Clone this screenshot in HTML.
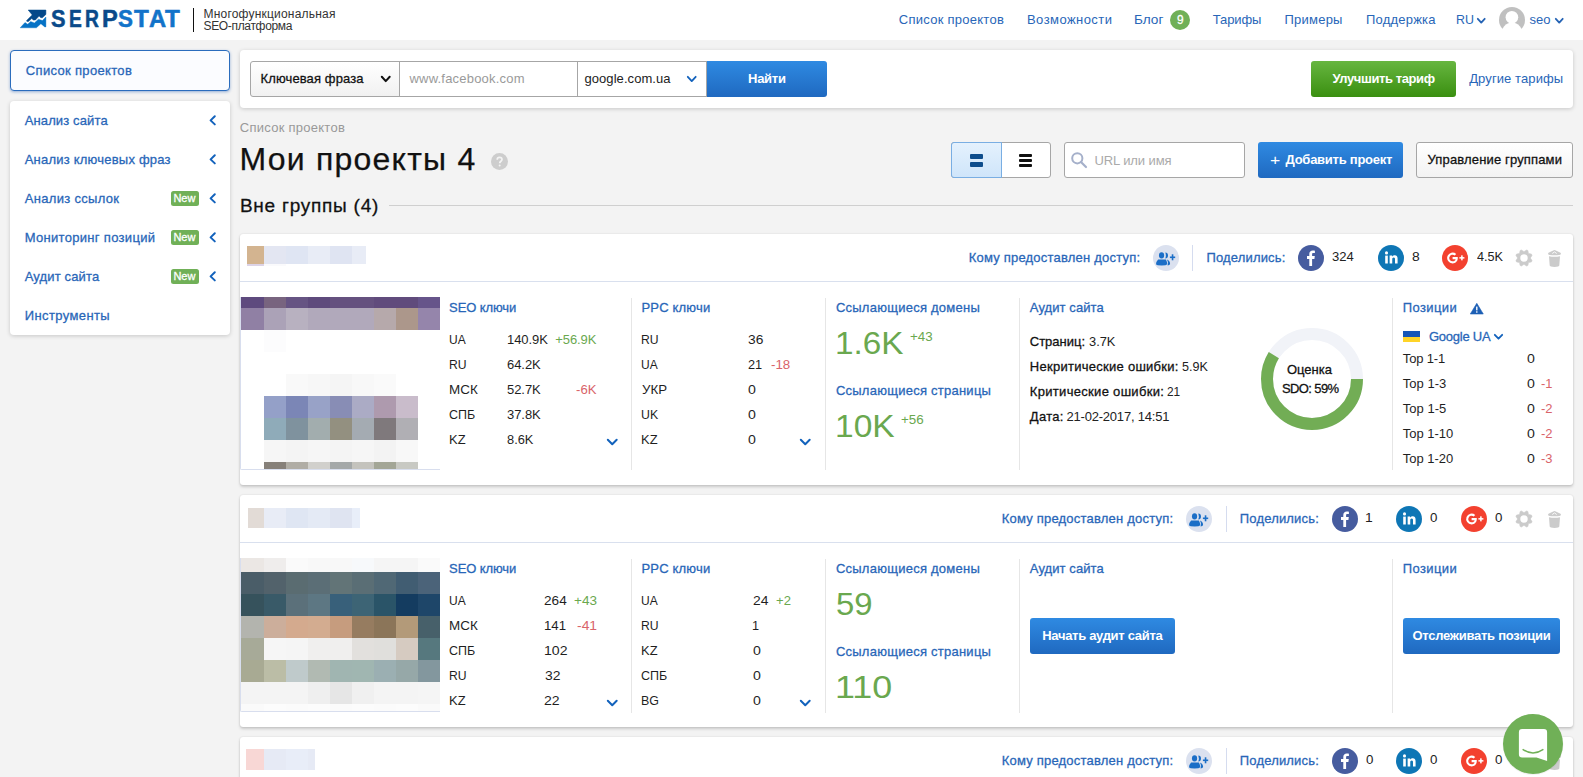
<!DOCTYPE html>
<html lang="ru"><head><meta charset="utf-8"><title>Serpstat — Мои проекты</title>
<style>
*{box-sizing:border-box;margin:0;padding:0}
html,body{width:1583px;height:777px;overflow:hidden;background:#f3f3f3;font-family:"Liberation Sans",sans-serif}
.a{position:absolute}
.t{position:absolute;white-space:pre;line-height:1;font-family:"Liberation Sans",sans-serif}
#txt{position:absolute;left:0;top:0;width:1583px;height:777px;pointer-events:none}
#hdr{position:absolute;left:0;top:0;width:1583px;height:40px;background:#fff}
.panel{position:absolute;background:#fff;border-radius:4px;box-shadow:0 1px 4px rgba(0,0,0,.18)}
.card{position:absolute;left:240px;width:1333px;background:#fff;border-radius:3px;box-shadow:0 2px 3px rgba(0,0,0,.17),0 0 2px rgba(0,0,0,.12)}
.hline{position:absolute;left:0;width:1333px;height:1px;background:#d9e0ee}
.vline{position:absolute;width:1px;background:#e6e6e6}
.btnb{position:absolute;border-radius:3px;background:linear-gradient(#2f8ae2,#1f69c0)}
.btng{position:absolute;border-radius:3px;background:linear-gradient(#67b640,#3a8f10)}
.circ{position:absolute;width:26px;height:26px;border-radius:50%}
.new{position:absolute;left:171px;width:28px;height:15px;border-radius:2.5px;background:#70b057}
.mz{position:absolute;overflow:hidden}
.mz i{position:absolute;display:block}
svg{position:absolute;overflow:visible}

</style></head>
<body>
<div id="hdr"></div>
<svg style="left:20px;top:10px" width="26" height="18" viewBox="0 0 26 18">
<polygon points="8.2,0 25.9,0 25.9,4.4 22.4,7.7 20.8,7.7 19.1,6.1 15.4,10 13.4,10 11.7,8.6 8.4,11.6 6.9,11.4 6.6,10.5 12.2,4.9" fill="#03488a" stroke="#03488a" stroke-width="0.5" stroke-linejoin="round"/>
<polygon points="0.2,17.8 5,12.5 7.7,14.2 10.7,11.6 14.4,12.9 18.4,9.2 22.4,10.6 25.9,7 25.9,16.9 24.8,16.9 20.9,13.7 16.4,17.8" fill="#0572c6" stroke="#0572c6" stroke-width="0.4" stroke-linejoin="round"/>
</svg>
<span class="t" style="left:51.34px;top:6.77px;font-size:22.9px;font-weight:700;color:#0a4a8a;transform:scale(0.949,1.064);transform-origin:0 0;-webkit-text-stroke:0.5px #0a4a8a">S</span>
<span class="t" style="left:69.44px;top:6.77px;font-size:22.9px;font-weight:700;color:#0a4a8a;transform:scale(0.837,1.064);transform-origin:0 0;-webkit-text-stroke:0.5px #0a4a8a">E</span>
<span class="t" style="left:85.34px;top:6.77px;font-size:22.9px;font-weight:700;color:#0a4a8a;transform:scale(0.841,1.064);transform-origin:0 0;-webkit-text-stroke:0.5px #0a4a8a">R</span>
<span class="t" style="left:102.35px;top:6.77px;font-size:22.9px;font-weight:700;color:#0a4a8a;transform:scale(1.031,1.064);transform-origin:0 0;-webkit-text-stroke:0.5px #0a4a8a">P</span>
<span class="t" style="left:118.02px;top:6.77px;font-size:22.9px;font-weight:700;color:#1273c9;transform:scale(0.978,1.064);transform-origin:0 0;-webkit-text-stroke:0.5px #1273c9">S</span>
<span class="t" style="left:134.08px;top:6.77px;font-size:22.9px;font-weight:700;color:#1273c9;transform:scale(1.060,1.064);transform-origin:0 0;-webkit-text-stroke:0.5px #1273c9">T</span>
<span class="t" style="left:148.58px;top:6.77px;font-size:22.9px;font-weight:700;color:#1273c9;transform:scale(1.039,1.064);transform-origin:0 0;-webkit-text-stroke:0.5px #1273c9">A</span>
<span class="t" style="left:165.38px;top:6.77px;font-size:22.9px;font-weight:700;color:#1273c9;transform:scale(1.060,1.064);transform-origin:0 0;-webkit-text-stroke:0.5px #1273c9">T</span>
<div class="a" style="left:193px;top:8px;width:1px;height:24px;background:#111"></div>
<div class="a" style="left:1170px;top:10px;width:20px;height:20px;border-radius:50%;background:#70b057"></div>
<svg style="left:1477px;top:17.5px" width="8.5" height="5.5" viewBox="0 0 8.5 5.5"><polyline points="0.8,0.8 4.25,4.6 7.7,0.8" fill="none" stroke="#2563b4" stroke-width="1.8" stroke-linecap="round" stroke-linejoin="round"/></svg>
<svg style="left:1554.5px;top:17.5px" width="8.5" height="5.5" viewBox="0 0 8.5 5.5"><polyline points="0.8,0.8 4.25,4.6 7.7,0.8" fill="none" stroke="#2563b4" stroke-width="1.8" stroke-linecap="round" stroke-linejoin="round"/></svg>
<svg style="left:1499px;top:7px;overflow:hidden" width="26" height="33" viewBox="0 0 26 33"><circle cx="13" cy="13" r="13" fill="#c0c0c0"/><g fill="#fff"><circle cx="12.9" cy="10.2" r="6.3"/><ellipse cx="13" cy="28" rx="11" ry="12.4"/></g></svg>
<div class="a" style="left:10px;top:50px;width:220px;height:41px;border-radius:4px;background:#fbfcff;border:1px solid #2a6cbd;box-shadow:0 1px 3px rgba(30,90,180,.45)"></div>
<div class="panel" style="left:10px;top:101px;width:220px;height:234px"></div>
<svg style="left:209.4px;top:115.4px" width="7" height="11" viewBox="0 0 7 11"><polyline points="5.8,1.3 1.6,5.35 5.8,9.4" fill="none" stroke="#1262bc" stroke-width="2" stroke-linecap="round" stroke-linejoin="round"/></svg>
<svg style="left:209.4px;top:154.4px" width="7" height="11" viewBox="0 0 7 11"><polyline points="5.8,1.3 1.6,5.35 5.8,9.4" fill="none" stroke="#1262bc" stroke-width="2" stroke-linecap="round" stroke-linejoin="round"/></svg>
<svg style="left:209.4px;top:193.4px" width="7" height="11" viewBox="0 0 7 11"><polyline points="5.8,1.3 1.6,5.35 5.8,9.4" fill="none" stroke="#1262bc" stroke-width="2" stroke-linecap="round" stroke-linejoin="round"/></svg>
<svg style="left:209.4px;top:232.4px" width="7" height="11" viewBox="0 0 7 11"><polyline points="5.8,1.3 1.6,5.35 5.8,9.4" fill="none" stroke="#1262bc" stroke-width="2" stroke-linecap="round" stroke-linejoin="round"/></svg>
<svg style="left:209.4px;top:271.4px" width="7" height="11" viewBox="0 0 7 11"><polyline points="5.8,1.3 1.6,5.35 5.8,9.4" fill="none" stroke="#1262bc" stroke-width="2" stroke-linecap="round" stroke-linejoin="round"/></svg>
<div class="new" style="top:191.2px"></div>
<div class="new" style="top:230.2px"></div>
<div class="new" style="top:269.2px"></div>
<div class="panel" style="left:240px;top:50px;width:1333px;height:57.5px"></div>
<div class="a" style="left:250px;top:61px;width:150px;height:36px;border:1px solid #a6a6a6;border-radius:3px 0 0 3px;background:linear-gradient(#fff,#f1f1f1)"></div>
<div class="a" style="left:399px;top:61px;width:179px;height:36px;border:1px solid #a6a6a6;background:#fff"></div>
<div class="a" style="left:577px;top:61px;width:130px;height:36px;border:1px solid #a6a6a6;background:#fff"></div>
<svg style="left:380.5px;top:76px" width="9.5" height="6" viewBox="0 0 9.5 6"><polyline points="0.8,0.8 4.75,5.1 8.7,0.8" fill="none" stroke="#111" stroke-width="2" stroke-linecap="round" stroke-linejoin="round"/></svg>
<svg style="left:687px;top:76px" width="9.5" height="6" viewBox="0 0 9.5 6"><polyline points="0.8,0.8 4.75,5.1 8.7,0.8" fill="none" stroke="#1262bc" stroke-width="1.8" stroke-linecap="round" stroke-linejoin="round"/></svg>
<div class="btnb" style="left:706.5px;top:61px;width:120.5px;height:36px;border-radius:0 3px 3px 0"></div>
<div class="btng" style="left:1311px;top:61px;width:145px;height:36px"></div>
<svg style="left:490.5px;top:152.5px" width="17" height="17" viewBox="0 0 17 17"><circle cx="8.5" cy="8.5" r="8.5" fill="#cdcdcd"/>
<path d="M6.2,6.7 C6.2,5.2 7.2,4.4 8.6,4.4 C10,4.4 11,5.2 11,6.5 C11,8.2 8.7,8.3 8.7,10.2" fill="none" stroke="#f3f3f3" stroke-width="1.7"/><circle cx="8.7" cy="12.4" r="1" fill="#f3f3f3"/></svg>
<div class="a" style="left:389px;top:205px;width:1184px;height:1px;background:#cfcfcf"></div>
<div class="a" style="left:951px;top:142px;width:100px;height:36px;border:1px solid #a6a6a6;border-radius:3px;background:#fff"></div>
<div class="a" style="left:951px;top:142px;width:51px;height:36px;border:1px solid #79aee3;border-radius:3px 0 0 3px;background:linear-gradient(#e4f1fd,#cfe5fa)"></div>
<div class="a" style="left:970px;top:154px;width:13px;height:5px;border-radius:1px;background:#0e4d8c"></div>
<div class="a" style="left:970px;top:162px;width:13px;height:5px;border-radius:1px;background:#0e4d8c"></div>
<div class="a" style="left:1019px;top:154px;width:13px;height:3px;border-radius:1px;background:#111"></div>
<div class="a" style="left:1019px;top:159px;width:13px;height:3px;border-radius:1px;background:#111"></div>
<div class="a" style="left:1019px;top:164px;width:13px;height:3px;border-radius:1px;background:#111"></div>
<div class="a" style="left:1064px;top:142px;width:181px;height:36px;border:1px solid #a6a6a6;border-radius:3px;background:#fff"></div>
<svg style="left:1071px;top:152px" width="16" height="16" viewBox="0 0 16 16"><circle cx="6.3" cy="6.3" r="5.1" fill="none" stroke="#a5b0ca" stroke-width="2"/><line x1="10" y1="10" x2="15" y2="15" stroke="#a5b0ca" stroke-width="2.2" stroke-linecap="round"/></svg>
<div class="btnb" style="left:1258px;top:142px;width:145px;height:36px"></div>
<div class="a" style="left:1416px;top:142px;width:157px;height:36px;border:1px solid #a6a6a6;border-radius:3px;background:linear-gradient(#fff,#f3f3f3)"></div>
<div class="card" style="top:234px;height:251px"></div>
<div class="hline" style="left:240px;top:281px"></div>
<svg style="left:1153px;top:245px" width="26" height="26" viewBox="0 0 26 26"><circle cx="13" cy="13" r="13" fill="#dbe1ef"/><g fill="#1b6ec7"><ellipse cx="8.55" cy="10.4" rx="2.6" ry="3.05"/><path d="M5.1,14.6 H12.9 Q14.3,17 14.1,19.2 Q13.5,20.4 8.6,20.4 Q3.6,20.4 3,19.2 Q2.9,17 5.1,14.6Z"/><path d="M12.3,7.4 Q15,7.6 15,10.4 Q15,13.2 12.3,13.4 Q13.4,10.4 12.3,7.4Z"/><path d="M14,14.6 Q17.1,16 17.1,19 Q16.6,20.3 14.6,20.4 Q15.8,17.5 14,14.6Z"/><rect x="16.9" y="11.5" width="5.3" height="1.6"/><rect x="18.75" y="9.3" width="1.6" height="6"/></g></svg>
<div class="a" style="left:1192px;top:244.6px;width:1px;height:26.5px;background:#d5dcef"></div>
<svg style="left:1298px;top:245px" width="26" height="26" viewBox="0 0 26 26"><circle cx="13" cy="13" r="13" fill="#465c9f"/><path d="M14.1,21 V13.9 H16.4 L16.8,11.1 H14.1 V9.4 C14.1,8.6 14.4,8.1 15.5,8.1 H16.9 V5.7 C16.6,5.6 15.8,5.5 14.8,5.5 C12.7,5.5 11.3,6.8 11.3,9.1 V11.1 H9 V13.9 H11.3 V21 Z" fill="#fff"/></svg>
<svg style="left:1377.7px;top:245px" width="26" height="26" viewBox="0 0 26 26"><circle cx="13" cy="13" r="13" fill="#0e76b5"/><g fill="#fff"><rect x="7.2" y="10.6" width="2.6" height="7.9"/><circle cx="8.5" cy="7.9" r="1.55"/><path d="M11.6,10.6 h2.5 v1.1 c0.5,-0.8 1.4,-1.35 2.6,-1.35 c2.2,0 2.9,1.4 2.9,3.5 v4.65 h-2.6 v-4.1 c0,-1.1 -0.3,-1.8 -1.25,-1.8 c-1.05,0 -1.5,0.75 -1.5,1.8 v4.1 h-2.6 Z"/></g></svg>
<svg style="left:1442px;top:245px" width="26" height="26" viewBox="0 0 26 26"><circle cx="13" cy="13" r="13" fill="#f3412f"/><g fill="#fff"><path d="M10.6,12.1 v2.1 h3 c-0.3,1.3 -1.3,2.1 -3,2.1 a3.3,3.3 0 1 1 2.1,-5.8 l1.5,-1.5 a5.4,5.4 0 1 0 -3.6,9.4 c3.1,0 5.2,-2.2 5.2,-5.3 c0,-0.4 0,-0.7 -0.1,-1 Z"/><rect x="17.4" y="12.1" width="5" height="1.5"/><rect x="19.15" y="10.35" width="1.5" height="5"/></g></svg>
<svg style="left:1515.2px;top:249.1px" width="18" height="18" viewBox="0 0 18 18"><polygon points="15.59,9.29 17.06,11.54 16.50,12.90 13.87,13.46 13.46,13.87 12.90,16.50 11.54,17.06 9.29,15.59 8.71,15.59 6.46,17.06 5.10,16.50 4.54,13.87 4.13,13.46 1.50,12.90 0.94,11.54 2.41,9.29 2.41,8.71 0.94,6.46 1.50,5.10 4.13,4.54 4.54,4.13 5.10,1.50 6.46,0.94 8.71,2.41 9.29,2.41 11.54,0.94 12.90,1.50 13.46,4.13 13.87,4.54 16.50,5.10 17.06,6.46 15.59,8.71" fill="#cbcbcb" stroke="#cbcbcb" stroke-width="0.5" stroke-linejoin="round"/><circle cx="9" cy="9" r="3.7" fill="#fff"/></svg>
<svg style="left:1548px;top:250px" width="13" height="17" viewBox="0 0 13 17"><g fill="#cbcbcb"><path d="M0,3.7 Q0,2.5 2,1.9 L5.2,0.4 Q6.5,-0.3 7.8,0.4 L11,1.9 Q13,2.5 13,3.7 Q13,5.3 6.5,5.3 Q0,5.3 0,3.7Z"/><path d="M1,6.2 Q6.5,7.5 12,6.2 L11.3,15.6 Q11.2,17 6.5,17 Q1.8,17 1.7,15.6 Z"/></g><polyline points="4.3,3.5 6.5,1.9 8.7,3.5" fill="none" stroke="#fff" stroke-width="0.9" stroke-linejoin="round"/></svg>
<div class="vline" style="left:631px;top:297.5px;height:172px"></div>
<div class="vline" style="left:825px;top:297.5px;height:172px"></div>
<div class="vline" style="left:1019px;top:297.5px;height:172px"></div>
<div class="vline" style="left:1392px;top:297.5px;height:172px"></div>
<svg style="left:606.7px;top:438.8px" width="10.5" height="6.2" viewBox="0 0 10.5 6.2"><polyline points="0.8,0.8 5.25,5.3 9.7,0.8" fill="none" stroke="#1262bc" stroke-width="2" stroke-linecap="round" stroke-linejoin="round"/></svg>
<svg style="left:800.4px;top:438.8px" width="10.5" height="6.2" viewBox="0 0 10.5 6.2"><polyline points="0.8,0.8 5.25,5.3 9.7,0.8" fill="none" stroke="#1262bc" stroke-width="2" stroke-linecap="round" stroke-linejoin="round"/></svg>
<div class="a" style="left:240px;top:297px;width:200px;height:173px;border-left:1px solid #d8deee;border-bottom:1px solid #d8deee;border-radius:0 0 0 2px"></div><div class="mz" style="left:241px;top:297px;width:199px;height:172px;background:#fff"><i style="left:0px;top:0px;width:23px;height:11px;background:#5e4a7e"></i><i style="left:23px;top:0px;width:22px;height:11px;background:#78647f"></i><i style="left:45px;top:0px;width:22px;height:11px;background:#665483"></i><i style="left:67px;top:0px;width:22px;height:11px;background:#5e4a7c"></i><i style="left:89px;top:0px;width:22px;height:11px;background:#65517f"></i><i style="left:111px;top:0px;width:22px;height:11px;background:#65517f"></i><i style="left:133px;top:0px;width:22px;height:11px;background:#604b7c"></i><i style="left:155px;top:0px;width:22px;height:11px;background:#604b7c"></i><i style="left:177px;top:0px;width:22px;height:11px;background:#66548a"></i><i style="left:0px;top:11px;width:23px;height:22px;background:#9080a4"></i><i style="left:23px;top:11px;width:22px;height:22px;background:#aba2b7"></i><i style="left:45px;top:11px;width:22px;height:22px;background:#b8b1c0"></i><i style="left:67px;top:11px;width:22px;height:22px;background:#b1a9bb"></i><i style="left:89px;top:11px;width:22px;height:22px;background:#b1a9bb"></i><i style="left:111px;top:11px;width:22px;height:22px;background:#b1a9bb"></i><i style="left:133px;top:11px;width:22px;height:22px;background:#b6a9ab"></i><i style="left:155px;top:11px;width:22px;height:22px;background:#ac978b"></i><i style="left:177px;top:11px;width:22px;height:22px;background:#9585ab"></i><i style="left:23px;top:33px;width:22px;height:22px;background:#fcfcfd"></i><i style="left:45px;top:77px;width:22px;height:22px;background:#f9f9f9"></i><i style="left:67px;top:77px;width:22px;height:22px;background:#f7f7f7"></i><i style="left:89px;top:77px;width:22px;height:22px;background:#f5f5f5"></i><i style="left:111px;top:77px;width:22px;height:22px;background:#f8f8f8"></i><i style="left:133px;top:77px;width:22px;height:22px;background:#fafafa"></i><i style="left:23px;top:99px;width:22px;height:22px;background:#94a0c8"></i><i style="left:45px;top:99px;width:22px;height:22px;background:#7b86b6"></i><i style="left:67px;top:99px;width:22px;height:22px;background:#98a2c7"></i><i style="left:89px;top:99px;width:22px;height:22px;background:#888db5"></i><i style="left:111px;top:99px;width:22px;height:22px;background:#ababc5"></i><i style="left:133px;top:99px;width:22px;height:22px;background:#ae9aae"></i><i style="left:155px;top:99px;width:22px;height:22px;background:#c9bccb"></i><i style="left:23px;top:121px;width:22px;height:22px;background:#8fabb9"></i><i style="left:45px;top:121px;width:22px;height:22px;background:#7f929e"></i><i style="left:67px;top:121px;width:22px;height:22px;background:#a2adae"></i><i style="left:89px;top:121px;width:22px;height:22px;background:#939080"></i><i style="left:111px;top:121px;width:22px;height:22px;background:#a4abb2"></i><i style="left:133px;top:121px;width:22px;height:22px;background:#7f797c"></i><i style="left:155px;top:121px;width:22px;height:22px;background:#b0afb4"></i><i style="left:23px;top:143px;width:22px;height:22px;background:#f6f6f6"></i><i style="left:45px;top:143px;width:22px;height:22px;background:#f4f4f4"></i><i style="left:67px;top:143px;width:22px;height:22px;background:#f6f6f6"></i><i style="left:89px;top:143px;width:22px;height:22px;background:#f4f4f4"></i><i style="left:111px;top:143px;width:22px;height:22px;background:#f6f6f6"></i><i style="left:133px;top:143px;width:22px;height:22px;background:#f3f3f3"></i><i style="left:155px;top:143px;width:22px;height:22px;background:#f8f8f8"></i><i style="left:23px;top:165px;width:22px;height:7px;background:#868079"></i><i style="left:45px;top:165px;width:22px;height:7px;background:#b0ada5"></i><i style="left:67px;top:165px;width:22px;height:7px;background:#d1d0cc"></i><i style="left:89px;top:165px;width:22px;height:7px;background:#a4a8a8"></i><i style="left:111px;top:165px;width:22px;height:7px;background:#c4c3bd"></i><i style="left:133px;top:165px;width:22px;height:7px;background:#a3a696"></i><i style="left:155px;top:165px;width:22px;height:7px;background:#c8c9c3"></i></div>
<div class="mz" style="left:247px;top:246px;width:119px;height:20px;background:#fff"><i style="left:0px;top:0px;width:17px;height:18px;background:#d3b490"></i><i style="left:17px;top:0px;width:22px;height:18px;background:#e3e6f2"></i><i style="left:39px;top:0px;width:22px;height:18px;background:#dfe5f3"></i><i style="left:61px;top:0px;width:22px;height:18px;background:#e8ecf6"></i><i style="left:83px;top:0px;width:22px;height:18px;background:#dfe4f2"></i><i style="left:105px;top:0px;width:14px;height:18px;background:#e8ecf6"></i><i style="left:0px;top:18px;width:17px;height:2px;background:#dcd3e6"></i><i style="left:17px;top:18px;width:22px;height:2px;background:#fafafc"></i></div>
<div class="card" style="top:495px;height:232px"></div>
<div class="hline" style="left:240px;top:542px"></div>
<svg style="left:1185.7px;top:506px" width="26" height="26" viewBox="0 0 26 26"><circle cx="13" cy="13" r="13" fill="#dbe1ef"/><g fill="#1b6ec7"><ellipse cx="8.55" cy="10.4" rx="2.6" ry="3.05"/><path d="M5.1,14.6 H12.9 Q14.3,17 14.1,19.2 Q13.5,20.4 8.6,20.4 Q3.6,20.4 3,19.2 Q2.9,17 5.1,14.6Z"/><path d="M12.3,7.4 Q15,7.6 15,10.4 Q15,13.2 12.3,13.4 Q13.4,10.4 12.3,7.4Z"/><path d="M14,14.6 Q17.1,16 17.1,19 Q16.6,20.3 14.6,20.4 Q15.8,17.5 14,14.6Z"/><rect x="16.9" y="11.5" width="5.3" height="1.6"/><rect x="18.75" y="9.3" width="1.6" height="6"/></g></svg>
<div class="a" style="left:1226px;top:505.6px;width:1px;height:26.5px;background:#d5dcef"></div>
<svg style="left:1332px;top:506px" width="26" height="26" viewBox="0 0 26 26"><circle cx="13" cy="13" r="13" fill="#465c9f"/><path d="M14.1,21 V13.9 H16.4 L16.8,11.1 H14.1 V9.4 C14.1,8.6 14.4,8.1 15.5,8.1 H16.9 V5.7 C16.6,5.6 15.8,5.5 14.8,5.5 C12.7,5.5 11.3,6.8 11.3,9.1 V11.1 H9 V13.9 H11.3 V21 Z" fill="#fff"/></svg>
<svg style="left:1396.2px;top:506px" width="26" height="26" viewBox="0 0 26 26"><circle cx="13" cy="13" r="13" fill="#0e76b5"/><g fill="#fff"><rect x="7.2" y="10.6" width="2.6" height="7.9"/><circle cx="8.5" cy="7.9" r="1.55"/><path d="M11.6,10.6 h2.5 v1.1 c0.5,-0.8 1.4,-1.35 2.6,-1.35 c2.2,0 2.9,1.4 2.9,3.5 v4.65 h-2.6 v-4.1 c0,-1.1 -0.3,-1.8 -1.25,-1.8 c-1.05,0 -1.5,0.75 -1.5,1.8 v4.1 h-2.6 Z"/></g></svg>
<svg style="left:1461.3px;top:506px" width="26" height="26" viewBox="0 0 26 26"><circle cx="13" cy="13" r="13" fill="#f3412f"/><g fill="#fff"><path d="M10.6,12.1 v2.1 h3 c-0.3,1.3 -1.3,2.1 -3,2.1 a3.3,3.3 0 1 1 2.1,-5.8 l1.5,-1.5 a5.4,5.4 0 1 0 -3.6,9.4 c3.1,0 5.2,-2.2 5.2,-5.3 c0,-0.4 0,-0.7 -0.1,-1 Z"/><rect x="17.4" y="12.1" width="5" height="1.5"/><rect x="19.15" y="10.35" width="1.5" height="5"/></g></svg>
<svg style="left:1515.2px;top:510.1px" width="18" height="18" viewBox="0 0 18 18"><polygon points="15.59,9.29 17.06,11.54 16.50,12.90 13.87,13.46 13.46,13.87 12.90,16.50 11.54,17.06 9.29,15.59 8.71,15.59 6.46,17.06 5.10,16.50 4.54,13.87 4.13,13.46 1.50,12.90 0.94,11.54 2.41,9.29 2.41,8.71 0.94,6.46 1.50,5.10 4.13,4.54 4.54,4.13 5.10,1.50 6.46,0.94 8.71,2.41 9.29,2.41 11.54,0.94 12.90,1.50 13.46,4.13 13.87,4.54 16.50,5.10 17.06,6.46 15.59,8.71" fill="#cbcbcb" stroke="#cbcbcb" stroke-width="0.5" stroke-linejoin="round"/><circle cx="9" cy="9" r="3.7" fill="#fff"/></svg>
<svg style="left:1548px;top:511px" width="13" height="17" viewBox="0 0 13 17"><g fill="#cbcbcb"><path d="M0,3.7 Q0,2.5 2,1.9 L5.2,0.4 Q6.5,-0.3 7.8,0.4 L11,1.9 Q13,2.5 13,3.7 Q13,5.3 6.5,5.3 Q0,5.3 0,3.7Z"/><path d="M1,6.2 Q6.5,7.5 12,6.2 L11.3,15.6 Q11.2,17 6.5,17 Q1.8,17 1.7,15.6 Z"/></g><polyline points="4.3,3.5 6.5,1.9 8.7,3.5" fill="none" stroke="#fff" stroke-width="0.9" stroke-linejoin="round"/></svg>
<div class="vline" style="left:631px;top:558.5px;height:154px"></div>
<div class="vline" style="left:825px;top:558.5px;height:154px"></div>
<div class="vline" style="left:1019px;top:558.5px;height:154px"></div>
<div class="vline" style="left:1392px;top:558.5px;height:154px"></div>
<svg style="left:606.7px;top:699.8px" width="10.5" height="6.2" viewBox="0 0 10.5 6.2"><polyline points="0.8,0.8 5.25,5.3 9.7,0.8" fill="none" stroke="#1262bc" stroke-width="2" stroke-linecap="round" stroke-linejoin="round"/></svg>
<svg style="left:800.4px;top:699.8px" width="10.5" height="6.2" viewBox="0 0 10.5 6.2"><polyline points="0.8,0.8 5.25,5.3 9.7,0.8" fill="none" stroke="#1262bc" stroke-width="2" stroke-linecap="round" stroke-linejoin="round"/></svg>
<div class="a" style="left:240px;top:558px;width:200px;height:154px;border-left:1px solid #d8deee;border-bottom:1px solid #d8deee;border-radius:0 0 0 2px"></div><div class="mz" style="left:241px;top:558px;width:199px;height:153px;background:#fff"><i style="left:0px;top:0px;width:23px;height:14px;background:#ebe7e4"></i><i style="left:23px;top:0px;width:22px;height:14px;background:#efedec"></i><i style="left:45px;top:0px;width:22px;height:14px;background:#fafafa"></i><i style="left:67px;top:0px;width:22px;height:14px;background:#f8f8f8"></i><i style="left:89px;top:0px;width:22px;height:14px;background:#f8f8f8"></i><i style="left:111px;top:0px;width:22px;height:14px;background:#f7f9fb"></i><i style="left:133px;top:0px;width:22px;height:14px;background:#f5f5f5"></i><i style="left:155px;top:0px;width:22px;height:14px;background:#f5f5f5"></i><i style="left:177px;top:0px;width:22px;height:14px;background:#fafafa"></i><i style="left:0px;top:14px;width:23px;height:22px;background:#4a5d68"></i><i style="left:23px;top:14px;width:22px;height:22px;background:#52626b"></i><i style="left:45px;top:14px;width:22px;height:22px;background:#5a6c71"></i><i style="left:67px;top:14px;width:22px;height:22px;background:#5b6e76"></i><i style="left:89px;top:14px;width:22px;height:22px;background:#627477"></i><i style="left:111px;top:14px;width:22px;height:22px;background:#5a6e75"></i><i style="left:133px;top:14px;width:22px;height:22px;background:#506875"></i><i style="left:155px;top:14px;width:22px;height:22px;background:#415d72"></i><i style="left:177px;top:14px;width:22px;height:22px;background:#4b6379"></i><i style="left:0px;top:36px;width:23px;height:22px;background:#36525c"></i><i style="left:23px;top:36px;width:22px;height:22px;background:#395a68"></i><i style="left:45px;top:36px;width:22px;height:22px;background:#5b707a"></i><i style="left:67px;top:36px;width:22px;height:22px;background:#5d7783"></i><i style="left:89px;top:36px;width:22px;height:22px;background:#38607a"></i><i style="left:111px;top:36px;width:22px;height:22px;background:#3d6475"></i><i style="left:133px;top:36px;width:22px;height:22px;background:#2a5468"></i><i style="left:155px;top:36px;width:22px;height:22px;background:#143c60"></i><i style="left:177px;top:36px;width:22px;height:22px;background:#1e4669"></i><i style="left:0px;top:58px;width:23px;height:22px;background:#b3b4ae"></i><i style="left:23px;top:58px;width:22px;height:22px;background:#ccae9b"></i><i style="left:45px;top:58px;width:22px;height:22px;background:#d4aa8e"></i><i style="left:67px;top:58px;width:22px;height:22px;background:#d3ac90"></i><i style="left:89px;top:58px;width:22px;height:22px;background:#c69c7e"></i><i style="left:111px;top:58px;width:22px;height:22px;background:#967c60"></i><i style="left:133px;top:58px;width:22px;height:22px;background:#8b7559"></i><i style="left:155px;top:58px;width:22px;height:22px;background:#b39a79"></i><i style="left:177px;top:58px;width:22px;height:22px;background:#47606a"></i><i style="left:0px;top:80px;width:23px;height:22px;background:#a7aa98"></i><i style="left:23px;top:80px;width:22px;height:22px;background:#f6f6f6"></i><i style="left:45px;top:80px;width:22px;height:22px;background:#f5f5f5"></i><i style="left:67px;top:80px;width:22px;height:22px;background:#f0efee"></i><i style="left:89px;top:80px;width:22px;height:22px;background:#f0efee"></i><i style="left:111px;top:80px;width:22px;height:22px;background:#e2e0dd"></i><i style="left:133px;top:80px;width:22px;height:22px;background:#e0dfdc"></i><i style="left:155px;top:80px;width:22px;height:22px;background:#d6cbc1"></i><i style="left:177px;top:80px;width:22px;height:22px;background:#56787e"></i><i style="left:0px;top:102px;width:23px;height:22px;background:#a8aa93"></i><i style="left:23px;top:102px;width:22px;height:22px;background:#bbbda6"></i><i style="left:45px;top:102px;width:22px;height:22px;background:#bfcacb"></i><i style="left:67px;top:102px;width:22px;height:22px;background:#b1bab2"></i><i style="left:89px;top:102px;width:22px;height:22px;background:#a0b5b1"></i><i style="left:111px;top:102px;width:22px;height:22px;background:#a0b6b1"></i><i style="left:133px;top:102px;width:22px;height:22px;background:#9bafb2"></i><i style="left:155px;top:102px;width:22px;height:22px;background:#96a8a8"></i><i style="left:177px;top:102px;width:22px;height:22px;background:#83979e"></i><i style="left:0px;top:124px;width:23px;height:22px;background:#f4f4f4"></i><i style="left:23px;top:124px;width:22px;height:22px;background:#f4f4f4"></i><i style="left:45px;top:124px;width:22px;height:22px;background:#f4f4f4"></i><i style="left:67px;top:124px;width:22px;height:22px;background:#efefef"></i><i style="left:89px;top:124px;width:22px;height:22px;background:#e6e6e6"></i><i style="left:111px;top:124px;width:22px;height:22px;background:#f0f0f0"></i><i style="left:133px;top:124px;width:22px;height:22px;background:#f4f4f4"></i><i style="left:155px;top:124px;width:22px;height:22px;background:#f4f4f4"></i><i style="left:177px;top:124px;width:22px;height:22px;background:#f5f5f5"></i><i style="left:0px;top:146px;width:23px;height:7px;background:#fafafa"></i><i style="left:23px;top:146px;width:22px;height:7px;background:#fcfcfc"></i><i style="left:45px;top:146px;width:22px;height:7px;background:#fbfbfb"></i><i style="left:67px;top:146px;width:22px;height:7px;background:#fcfcfc"></i><i style="left:89px;top:146px;width:22px;height:7px;background:#fbfbfb"></i><i style="left:111px;top:146px;width:22px;height:7px;background:#fcfcfc"></i><i style="left:133px;top:146px;width:22px;height:7px;background:#fbfbfb"></i><i style="left:155px;top:146px;width:22px;height:7px;background:#fcfcfc"></i><i style="left:177px;top:146px;width:22px;height:7px;background:#fafafa"></i></div>
<div class="mz" style="left:248px;top:508px;width:112px;height:20px;background:#fff"><i style="left:0px;top:0px;width:16px;height:20px;background:#e2dbd6"></i><i style="left:16px;top:0px;width:22px;height:20px;background:#e8ecf6"></i><i style="left:38px;top:0px;width:22px;height:20px;background:#dfe6f3"></i><i style="left:60px;top:0px;width:22px;height:20px;background:#e4eaf5"></i><i style="left:82px;top:0px;width:22px;height:20px;background:#dfe4f1"></i><i style="left:104px;top:0px;width:8px;height:20px;background:#e8eef9"></i></div>
<div class="card" style="top:737px;height:60px"></div>
<div class="hline" style="left:240px;top:784px"></div>
<svg style="left:1185.7px;top:748px" width="26" height="26" viewBox="0 0 26 26"><circle cx="13" cy="13" r="13" fill="#dbe1ef"/><g fill="#1b6ec7"><ellipse cx="8.55" cy="10.4" rx="2.6" ry="3.05"/><path d="M5.1,14.6 H12.9 Q14.3,17 14.1,19.2 Q13.5,20.4 8.6,20.4 Q3.6,20.4 3,19.2 Q2.9,17 5.1,14.6Z"/><path d="M12.3,7.4 Q15,7.6 15,10.4 Q15,13.2 12.3,13.4 Q13.4,10.4 12.3,7.4Z"/><path d="M14,14.6 Q17.1,16 17.1,19 Q16.6,20.3 14.6,20.4 Q15.8,17.5 14,14.6Z"/><rect x="16.9" y="11.5" width="5.3" height="1.6"/><rect x="18.75" y="9.3" width="1.6" height="6"/></g></svg>
<div class="a" style="left:1226px;top:747.6px;width:1px;height:26.5px;background:#d5dcef"></div>
<svg style="left:1332px;top:748px" width="26" height="26" viewBox="0 0 26 26"><circle cx="13" cy="13" r="13" fill="#465c9f"/><path d="M14.1,21 V13.9 H16.4 L16.8,11.1 H14.1 V9.4 C14.1,8.6 14.4,8.1 15.5,8.1 H16.9 V5.7 C16.6,5.6 15.8,5.5 14.8,5.5 C12.7,5.5 11.3,6.8 11.3,9.1 V11.1 H9 V13.9 H11.3 V21 Z" fill="#fff"/></svg>
<svg style="left:1396.2px;top:748px" width="26" height="26" viewBox="0 0 26 26"><circle cx="13" cy="13" r="13" fill="#0e76b5"/><g fill="#fff"><rect x="7.2" y="10.6" width="2.6" height="7.9"/><circle cx="8.5" cy="7.9" r="1.55"/><path d="M11.6,10.6 h2.5 v1.1 c0.5,-0.8 1.4,-1.35 2.6,-1.35 c2.2,0 2.9,1.4 2.9,3.5 v4.65 h-2.6 v-4.1 c0,-1.1 -0.3,-1.8 -1.25,-1.8 c-1.05,0 -1.5,0.75 -1.5,1.8 v4.1 h-2.6 Z"/></g></svg>
<svg style="left:1461.3px;top:748px" width="26" height="26" viewBox="0 0 26 26"><circle cx="13" cy="13" r="13" fill="#f3412f"/><g fill="#fff"><path d="M10.6,12.1 v2.1 h3 c-0.3,1.3 -1.3,2.1 -3,2.1 a3.3,3.3 0 1 1 2.1,-5.8 l1.5,-1.5 a5.4,5.4 0 1 0 -3.6,9.4 c3.1,0 5.2,-2.2 5.2,-5.3 c0,-0.4 0,-0.7 -0.1,-1 Z"/><rect x="17.4" y="12.1" width="5" height="1.5"/><rect x="19.15" y="10.35" width="1.5" height="5"/></g></svg>
<svg style="left:1515.2px;top:752.1px" width="18" height="18" viewBox="0 0 18 18"><polygon points="15.59,9.29 17.06,11.54 16.50,12.90 13.87,13.46 13.46,13.87 12.90,16.50 11.54,17.06 9.29,15.59 8.71,15.59 6.46,17.06 5.10,16.50 4.54,13.87 4.13,13.46 1.50,12.90 0.94,11.54 2.41,9.29 2.41,8.71 0.94,6.46 1.50,5.10 4.13,4.54 4.54,4.13 5.10,1.50 6.46,0.94 8.71,2.41 9.29,2.41 11.54,0.94 12.90,1.50 13.46,4.13 13.87,4.54 16.50,5.10 17.06,6.46 15.59,8.71" fill="#cbcbcb" stroke="#cbcbcb" stroke-width="0.5" stroke-linejoin="round"/><circle cx="9" cy="9" r="3.7" fill="#fff"/></svg>
<svg style="left:1548px;top:753px" width="13" height="17" viewBox="0 0 13 17"><g fill="#cbcbcb"><path d="M0,3.7 Q0,2.5 2,1.9 L5.2,0.4 Q6.5,-0.3 7.8,0.4 L11,1.9 Q13,2.5 13,3.7 Q13,5.3 6.5,5.3 Q0,5.3 0,3.7Z"/><path d="M1,6.2 Q6.5,7.5 12,6.2 L11.3,15.6 Q11.2,17 6.5,17 Q1.8,17 1.7,15.6 Z"/></g><polyline points="4.3,3.5 6.5,1.9 8.7,3.5" fill="none" stroke="#fff" stroke-width="0.9" stroke-linejoin="round"/></svg>
<div class="mz" style="left:246px;top:749px;width:69px;height:21px;background:#fff"><i style="left:0px;top:0px;width:18px;height:21px;background:#f8d7d5"></i><i style="left:18px;top:0px;width:22px;height:21px;background:#e6eaf5"></i><i style="left:40px;top:0px;width:22px;height:21px;background:#e8edf8"></i><i style="left:62px;top:0px;width:7px;height:21px;background:#e6eaf5"></i></div>
<svg style="left:1260.5px;top:328.3px" width="102" height="102" viewBox="0 0 102 102"><circle cx="51" cy="51" r="45" fill="none" stroke="#f1f3f8" stroke-width="12"/>
<circle cx="51" cy="51" r="45" fill="none" stroke="#72ad55" stroke-width="12" stroke-dasharray="166.25 282.74"/></svg>
<svg style="left:1469.5px;top:302.8px" width="13.6" height="11.4" viewBox="0 0 13.6 11.4"><path d="M6.8,0.3 L13.3,11 H0.3 Z" fill="#1d5fb5" stroke="#1d5fb5" stroke-width="0.6" stroke-linejoin="round"/><rect x="6.1" y="3.6" width="1.4" height="3.8" fill="#fff"/><rect x="6.1" y="8.3" width="1.4" height="1.4" fill="#fff"/></svg>
<div class="a" style="left:1403px;top:331px;width:16.5px;height:5.7px;background:#1656b8"></div>
<div class="a" style="left:1403px;top:336.7px;width:16.5px;height:5.7px;background:#ffd428"></div>
<svg style="left:1494px;top:333.5px" width="9" height="5.6" viewBox="0 0 9 5.6"><polyline points="0.8,0.8 4.5,4.699999999999999 8.2,0.8" fill="none" stroke="#1262bc" stroke-width="1.8" stroke-linecap="round" stroke-linejoin="round"/></svg>
<div class="btnb" style="left:1030px;top:618px;width:145px;height:36px"></div>
<div class="btnb" style="left:1403px;top:618px;width:157px;height:36px"></div>
<svg style="left:1503.1px;top:713.9px" width="60" height="60" viewBox="0 0 60 60"><circle cx="30" cy="30.6" r="30.5" fill="rgba(0,0,0,0.05)"/><circle cx="30" cy="30" r="30" fill="#70b057"/>
<path d="M15.9,18.3 a3.2,3.2 0 0 1 3.2,-3.2 h21.8 a3.2,3.2 0 0 1 3.2,3.2 V47.1 L33.5,43.4 H19.1 a3.2,3.2 0 0 1 -3.2,-3.2 Z" fill="#fff"/>
<path d="M20.1,35.6 Q30,42.4 39.9,35.6" fill="none" stroke="#70b057" stroke-width="1.4" stroke-linecap="round"/></svg>
<div id="txt">
<span class="t" style="left:203.5px;top:8.0px;font-size:12px;font-weight:400;color:#333;letter-spacing:0.20px">Многофункциональная</span>
<span class="t" style="left:203.5px;top:19.6px;font-size:12px;font-weight:400;color:#333;letter-spacing:-0.33px">SEO-платформа</span>
<span class="t" style="left:898.8px;top:13.0px;font-size:13px;font-weight:400;color:#2866b8;letter-spacing:0.26px">Список проектов</span>
<span class="t" style="left:1027.0px;top:13.0px;font-size:13px;font-weight:400;color:#2866b8;letter-spacing:0.44px">Возможности</span>
<span class="t" style="left:1134.0px;top:13.0px;font-size:13px;font-weight:400;color:#2866b8;transform:scaleX(1.047);transform-origin:0 0">Блог</span>
<span class="t" style="left:1176.7px;top:14.1px;font-size:12px;font-weight:400;-webkit-text-stroke:0.28px;color:#fff;transform:scaleX(0.987);transform-origin:0 0">9</span>
<span class="t" style="left:1212.8px;top:13.0px;font-size:13px;font-weight:400;color:#2866b8;letter-spacing:-0.09px">Тарифы</span>
<span class="t" style="left:1284.5px;top:13.0px;font-size:13px;font-weight:400;color:#2866b8;letter-spacing:0.23px">Примеры</span>
<span class="t" style="left:1366.0px;top:13.0px;font-size:13px;font-weight:400;color:#2866b8;letter-spacing:0.21px">Поддержка</span>
<span class="t" style="left:1456.0px;top:13.0px;font-size:13px;font-weight:400;color:#2866b8;transform:scaleX(0.955);transform-origin:0 0">RU</span>
<span class="t" style="left:1529.6px;top:13.0px;font-size:13px;font-weight:400;color:#2866b8;transform:scaleX(1.000);transform-origin:0 0">seo</span>
<span class="t" style="left:25.8px;top:64.0px;font-size:13px;font-weight:400;-webkit-text-stroke:0.28px;color:#2866b8;letter-spacing:0.33px">Список проектов</span>
<span class="t" style="left:24.7px;top:114.4px;font-size:13px;font-weight:400;-webkit-text-stroke:0.28px;color:#2866b8;letter-spacing:0.13px">Анализ сайта</span>
<span class="t" style="left:24.7px;top:153.4px;font-size:13px;font-weight:400;-webkit-text-stroke:0.28px;color:#2866b8;letter-spacing:0.22px">Анализ ключевых фраз</span>
<span class="t" style="left:24.7px;top:192.4px;font-size:13px;font-weight:400;-webkit-text-stroke:0.28px;color:#2866b8;letter-spacing:0.32px">Анализ ссылок</span>
<span class="t" style="left:24.7px;top:231.4px;font-size:13px;font-weight:400;-webkit-text-stroke:0.28px;color:#2866b8;letter-spacing:0.31px">Мониторинг позиций</span>
<span class="t" style="left:24.7px;top:270.4px;font-size:13px;font-weight:400;-webkit-text-stroke:0.28px;color:#2866b8;letter-spacing:0.14px">Аудит сайта</span>
<span class="t" style="left:24.7px;top:309.4px;font-size:13px;font-weight:400;-webkit-text-stroke:0.28px;color:#2866b8;letter-spacing:0.39px">Инструменты</span>
<span class="t" style="left:173.4px;top:193.1px;font-size:11px;font-weight:400;-webkit-text-stroke:0.28px;color:#fff;transform:scaleX(1.000);transform-origin:0 0">New</span>
<span class="t" style="left:173.4px;top:232.1px;font-size:11px;font-weight:400;-webkit-text-stroke:0.28px;color:#fff;transform:scaleX(1.000);transform-origin:0 0">New</span>
<span class="t" style="left:173.4px;top:271.1px;font-size:11px;font-weight:400;-webkit-text-stroke:0.28px;color:#fff;transform:scaleX(1.000);transform-origin:0 0">New</span>
<span class="t" style="left:260.5px;top:72.0px;font-size:13px;font-weight:400;-webkit-text-stroke:0.28px;color:#111;letter-spacing:0.12px">Ключевая фраза</span>
<span class="t" style="left:409.5px;top:72.0px;font-size:13px;font-weight:400;color:#9a9a9a;letter-spacing:0.20px">www.facebook.com</span>
<span class="t" style="left:584.5px;top:72.0px;font-size:13px;font-weight:400;color:#222;letter-spacing:0.06px">google.com.ua</span>
<span class="t" style="left:748.0px;top:72.0px;font-size:13px;font-weight:700;color:#fff;letter-spacing:-0.25px">Найти</span>
<span class="t" style="left:1332.5px;top:72.0px;font-size:13px;font-weight:700;color:#fff;letter-spacing:-0.41px">Улучшить тариф</span>
<span class="t" style="left:1469.2px;top:72.0px;font-size:13px;font-weight:400;color:#2866b8;letter-spacing:0.10px">Другие тарифы</span>
<span class="t" style="left:239.8px;top:121.4px;font-size:13px;font-weight:400;color:#999;letter-spacing:0.26px">Список проектов</span>
<span class="t" style="left:239.4px;top:142.9px;font-size:32px;font-weight:400;-webkit-text-stroke:0.25px;color:#111;letter-spacing:1.24px">Мои проекты 4</span>
<span class="t" style="left:239.9px;top:195.9px;font-size:19px;font-weight:400;-webkit-text-stroke:0.28px;color:#111;letter-spacing:0.76px">Вне группы (4)</span>
<span class="t" style="left:1094.5px;top:154.0px;font-size:13px;font-weight:400;color:#aaa;letter-spacing:-0.11px">URL или имя</span>
<span class="t" style="left:1270.1px;top:151.9px;font-size:15px;font-weight:400;color:#fff;transform:scaleX(1.172);transform-origin:0 0">+</span>
<span class="t" style="left:1285.5px;top:153.4px;font-size:13px;font-weight:700;color:#fff;letter-spacing:-0.25px">Добавить проект</span>
<span class="t" style="left:1427.5px;top:153.4px;font-size:13px;font-weight:400;-webkit-text-stroke:0.28px;color:#111;letter-spacing:0.15px">Управление группами</span>
<span class="t" style="left:968.7px;top:251.3px;font-size:13px;font-weight:400;-webkit-text-stroke:0.28px;color:#2866b8;letter-spacing:0.21px">Кому предоставлен доступ:</span>
<span class="t" style="left:1206.4px;top:251.3px;font-size:13px;font-weight:400;-webkit-text-stroke:0.28px;color:#2866b8;letter-spacing:0.17px">Поделились:</span>
<span class="t" style="left:1332.3px;top:250.0px;font-size:13px;font-weight:400;color:#222;transform:scaleX(1.006);transform-origin:0 0">324</span>
<span class="t" style="left:1411.5px;top:250.0px;font-size:13px;font-weight:400;color:#222;transform:scaleX(1.067);transform-origin:0 0">8</span>
<span class="t" style="left:1476.5px;top:250.0px;font-size:13px;font-weight:400;color:#222;transform:scaleX(0.975);transform-origin:0 0">4.5K</span>
<span class="t" style="left:449.1px;top:301.2px;font-size:13px;font-weight:400;-webkit-text-stroke:0.28px;color:#2866b8;letter-spacing:-0.10px">SEO ключи</span>
<span class="t" style="left:448.7px;top:333.0px;font-size:13px;font-weight:400;color:#1f1f1f;transform:scaleX(0.924);transform-origin:0 0">UA</span>
<span class="t" style="left:507.0px;top:333.0px;font-size:13px;font-weight:400;color:#1f1f1f;letter-spacing:-0.05px">140.9K</span>
<span class="t" style="left:555.2px;top:333.0px;font-size:13px;font-weight:400;color:#6aa84f;letter-spacing:-0.06px">+56.9K</span>
<span class="t" style="left:448.7px;top:358.0px;font-size:13px;font-weight:400;color:#1f1f1f;transform:scaleX(0.937);transform-origin:0 0">RU</span>
<span class="t" style="left:507.0px;top:358.0px;font-size:13px;font-weight:400;color:#1f1f1f;letter-spacing:-0.05px">64.2K</span>
<span class="t" style="left:448.6px;top:383.0px;font-size:13px;font-weight:400;color:#1f1f1f;transform:scaleX(1.033);transform-origin:0 0">МСК</span>
<span class="t" style="left:507.0px;top:383.0px;font-size:13px;font-weight:400;color:#1f1f1f;letter-spacing:-0.05px">52.7K</span>
<span class="t" style="left:575.8px;top:383.0px;font-size:13px;font-weight:400;color:#d9646a;transform:scaleX(1.012);transform-origin:0 0">-6K</span>
<span class="t" style="left:449.0px;top:408.0px;font-size:13px;font-weight:400;color:#1f1f1f;transform:scaleX(0.962);transform-origin:0 0">СПБ</span>
<span class="t" style="left:507.0px;top:408.0px;font-size:13px;font-weight:400;color:#1f1f1f;letter-spacing:-0.05px">37.8K</span>
<span class="t" style="left:448.6px;top:433.0px;font-size:13px;font-weight:400;color:#1f1f1f;transform:scaleX(0.997);transform-origin:0 0">KZ</span>
<span class="t" style="left:506.9px;top:433.0px;font-size:13px;font-weight:400;color:#1f1f1f;transform:scaleX(0.986);transform-origin:0 0">8.6K</span>
<span class="t" style="left:641.5px;top:301.2px;font-size:13px;font-weight:400;-webkit-text-stroke:0.28px;color:#2866b8;letter-spacing:0.18px">PPC ключи</span>
<span class="t" style="left:641.1px;top:333.0px;font-size:13px;font-weight:400;color:#1f1f1f;transform:scaleX(0.937);transform-origin:0 0">RU</span>
<span class="t" style="left:748.3px;top:333.0px;font-size:13px;font-weight:400;color:#1f1f1f;transform:scaleX(1.062);transform-origin:0 0">36</span>
<span class="t" style="left:641.1px;top:358.0px;font-size:13px;font-weight:400;color:#1f1f1f;transform:scaleX(0.924);transform-origin:0 0">UA</span>
<span class="t" style="left:748.2px;top:358.0px;font-size:13px;font-weight:400;color:#1f1f1f;transform:scaleX(0.981);transform-origin:0 0">21</span>
<span class="t" style="left:771.0px;top:358.0px;font-size:13px;font-weight:400;color:#d9646a;transform:scaleX(1.027);transform-origin:0 0">-18</span>
<span class="t" style="left:641.6px;top:383.0px;font-size:13px;font-weight:400;color:#1f1f1f;transform:scaleX(1.021);transform-origin:0 0">УКР</span>
<span class="t" style="left:748.3px;top:383.0px;font-size:13px;font-weight:400;color:#1f1f1f;transform:scaleX(1.088);transform-origin:0 0">0</span>
<span class="t" style="left:641.1px;top:408.0px;font-size:13px;font-weight:400;color:#1f1f1f;transform:scaleX(0.948);transform-origin:0 0">UK</span>
<span class="t" style="left:748.3px;top:408.0px;font-size:13px;font-weight:400;color:#1f1f1f;transform:scaleX(1.088);transform-origin:0 0">0</span>
<span class="t" style="left:641.0px;top:433.0px;font-size:13px;font-weight:400;color:#1f1f1f;transform:scaleX(0.997);transform-origin:0 0">KZ</span>
<span class="t" style="left:748.3px;top:433.0px;font-size:13px;font-weight:400;color:#1f1f1f;transform:scaleX(1.088);transform-origin:0 0">0</span>
<span class="t" style="left:835.9px;top:301.2px;font-size:13px;font-weight:400;-webkit-text-stroke:0.28px;color:#2866b8;letter-spacing:0.25px">Ссылающиеся домены</span>
<span class="t" style="left:835.9px;top:383.8px;font-size:13px;font-weight:400;-webkit-text-stroke:0.28px;color:#2866b8;letter-spacing:0.25px">Ссылающиеся страницы</span>
<span class="t" style="left:834.9px;top:327.3px;font-size:32px;font-weight:400;color:#6aa84f;transform:scaleX(1.040);transform-origin:0 0">1.6K</span>
<span class="t" style="left:834.9px;top:410.1px;font-size:32px;font-weight:400;color:#6aa84f;transform:scaleX(1.048);transform-origin:0 0">10K</span>
<span class="t" style="left:910.3px;top:331.0px;font-size:12px;font-weight:400;color:#6aa84f;transform:scaleX(1.112);transform-origin:0 0">+43</span>
<span class="t" style="left:901.3px;top:413.8px;font-size:12px;font-weight:400;color:#6aa84f;transform:scaleX(1.117);transform-origin:0 0">+56</span>
<span class="t" style="left:1029.8px;top:301.2px;font-size:13px;font-weight:400;-webkit-text-stroke:0.28px;color:#2866b8;letter-spacing:0.09px">Аудит сайта</span>
<span class="t" style="left:1402.8px;top:301.2px;font-size:13px;font-weight:400;-webkit-text-stroke:0.28px;color:#2866b8;letter-spacing:0.39px">Позиции</span>
<span class="t" style="left:1001.7px;top:512.3px;font-size:13px;font-weight:400;-webkit-text-stroke:0.28px;color:#2866b8;letter-spacing:0.21px">Кому предоставлен доступ:</span>
<span class="t" style="left:1239.8px;top:512.3px;font-size:13px;font-weight:400;-webkit-text-stroke:0.28px;color:#2866b8;letter-spacing:0.17px">Поделились:</span>
<span class="t" style="left:1365.0px;top:511.0px;font-size:13px;font-weight:400;color:#222;transform:scaleX(1.067);transform-origin:0 0">1</span>
<span class="t" style="left:1430.2px;top:511.0px;font-size:13px;font-weight:400;color:#222;transform:scaleX(1.024);transform-origin:0 0">0</span>
<span class="t" style="left:1495.3px;top:511.0px;font-size:13px;font-weight:400;color:#222;transform:scaleX(1.024);transform-origin:0 0">0</span>
<span class="t" style="left:449.1px;top:562.2px;font-size:13px;font-weight:400;-webkit-text-stroke:0.28px;color:#2866b8;letter-spacing:-0.10px">SEO ключи</span>
<span class="t" style="left:448.7px;top:594.0px;font-size:13px;font-weight:400;color:#1f1f1f;transform:scaleX(0.924);transform-origin:0 0">UA</span>
<span class="t" style="left:544.3px;top:594.0px;font-size:13px;font-weight:400;color:#1f1f1f;transform:scaleX(1.046);transform-origin:0 0">264</span>
<span class="t" style="left:573.7px;top:594.0px;font-size:13px;font-weight:400;color:#6aa84f;transform:scaleX(1.040);transform-origin:0 0">+43</span>
<span class="t" style="left:448.6px;top:619.0px;font-size:13px;font-weight:400;color:#1f1f1f;transform:scaleX(1.033);transform-origin:0 0">МСК</span>
<span class="t" style="left:544.0px;top:619.0px;font-size:13px;font-weight:400;color:#1f1f1f;transform:scaleX(1.019);transform-origin:0 0">141</span>
<span class="t" style="left:576.6px;top:619.0px;font-size:13px;font-weight:400;color:#d9646a;transform:scaleX(1.069);transform-origin:0 0">-41</span>
<span class="t" style="left:449.0px;top:644.0px;font-size:13px;font-weight:400;color:#1f1f1f;transform:scaleX(0.962);transform-origin:0 0">СПБ</span>
<span class="t" style="left:543.9px;top:644.0px;font-size:13px;font-weight:400;color:#1f1f1f;transform:scaleX(1.085);transform-origin:0 0">102</span>
<span class="t" style="left:448.7px;top:669.0px;font-size:13px;font-weight:400;color:#1f1f1f;transform:scaleX(0.937);transform-origin:0 0">RU</span>
<span class="t" style="left:544.5px;top:669.0px;font-size:13px;font-weight:400;color:#1f1f1f;transform:scaleX(1.072);transform-origin:0 0">32</span>
<span class="t" style="left:448.6px;top:694.0px;font-size:13px;font-weight:400;color:#1f1f1f;transform:scaleX(0.997);transform-origin:0 0">KZ</span>
<span class="t" style="left:544.3px;top:694.0px;font-size:13px;font-weight:400;color:#1f1f1f;transform:scaleX(1.082);transform-origin:0 0">22</span>
<span class="t" style="left:641.5px;top:562.2px;font-size:13px;font-weight:400;-webkit-text-stroke:0.28px;color:#2866b8;letter-spacing:0.18px">PPC ключи</span>
<span class="t" style="left:641.1px;top:594.0px;font-size:13px;font-weight:400;color:#1f1f1f;transform:scaleX(0.924);transform-origin:0 0">UA</span>
<span class="t" style="left:752.5px;top:594.0px;font-size:13px;font-weight:400;color:#1f1f1f;transform:scaleX(1.067);transform-origin:0 0">24</span>
<span class="t" style="left:775.5px;top:594.0px;font-size:13px;font-weight:400;color:#6aa84f;transform:scaleX(1.007);transform-origin:0 0">+2</span>
<span class="t" style="left:641.1px;top:619.0px;font-size:13px;font-weight:400;color:#1f1f1f;transform:scaleX(0.937);transform-origin:0 0">RU</span>
<span class="t" style="left:752.2px;top:619.0px;font-size:13px;font-weight:400;color:#1f1f1f;transform:scaleX(0.978);transform-origin:0 0">1</span>
<span class="t" style="left:641.0px;top:644.0px;font-size:13px;font-weight:400;color:#1f1f1f;transform:scaleX(0.997);transform-origin:0 0">KZ</span>
<span class="t" style="left:752.7px;top:644.0px;font-size:13px;font-weight:400;color:#1f1f1f;transform:scaleX(1.088);transform-origin:0 0">0</span>
<span class="t" style="left:641.4px;top:669.0px;font-size:13px;font-weight:400;color:#1f1f1f;transform:scaleX(0.962);transform-origin:0 0">СПБ</span>
<span class="t" style="left:752.7px;top:669.0px;font-size:13px;font-weight:400;color:#1f1f1f;transform:scaleX(1.088);transform-origin:0 0">0</span>
<span class="t" style="left:641.0px;top:694.0px;font-size:13px;font-weight:400;color:#1f1f1f;transform:scaleX(0.955);transform-origin:0 0">BG</span>
<span class="t" style="left:752.7px;top:694.0px;font-size:13px;font-weight:400;color:#1f1f1f;transform:scaleX(1.088);transform-origin:0 0">0</span>
<span class="t" style="left:835.9px;top:562.2px;font-size:13px;font-weight:400;-webkit-text-stroke:0.28px;color:#2866b8;letter-spacing:0.25px">Ссылающиеся домены</span>
<span class="t" style="left:835.9px;top:644.8px;font-size:13px;font-weight:400;-webkit-text-stroke:0.28px;color:#2866b8;letter-spacing:0.25px">Ссылающиеся страницы</span>
<span class="t" style="left:836.1px;top:588.3px;font-size:32px;font-weight:400;color:#6aa84f;transform:scaleX(1.028);transform-origin:0 0">59</span>
<span class="t" style="left:834.7px;top:671.1px;font-size:32px;font-weight:400;color:#6aa84f;transform:scaleX(1.121);transform-origin:0 0">110</span>
<span class="t" style="left:1029.8px;top:562.2px;font-size:13px;font-weight:400;-webkit-text-stroke:0.28px;color:#2866b8;letter-spacing:0.09px">Аудит сайта</span>
<span class="t" style="left:1402.8px;top:562.2px;font-size:13px;font-weight:400;-webkit-text-stroke:0.28px;color:#2866b8;letter-spacing:0.39px">Позиции</span>
<span class="t" style="left:1001.7px;top:754.3px;font-size:13px;font-weight:400;-webkit-text-stroke:0.28px;color:#2866b8;letter-spacing:0.21px">Кому предоставлен доступ:</span>
<span class="t" style="left:1239.8px;top:754.3px;font-size:13px;font-weight:400;-webkit-text-stroke:0.28px;color:#2866b8;letter-spacing:0.17px">Поделились:</span>
<span class="t" style="left:1365.6px;top:753.0px;font-size:13px;font-weight:400;color:#222;transform:scaleX(1.024);transform-origin:0 0">0</span>
<span class="t" style="left:1430.2px;top:753.0px;font-size:13px;font-weight:400;color:#222;transform:scaleX(1.024);transform-origin:0 0">0</span>
<span class="t" style="left:1495.3px;top:753.0px;font-size:13px;font-weight:400;color:#222;transform:scaleX(1.024);transform-origin:0 0">0</span>
<span class="t" style="left:1029.8px;top:335.0px;font-size:13px;font-weight:400;-webkit-text-stroke:0.28px;color:#111;letter-spacing:-0.01px">Страниц:</span>
<span class="t" style="left:1088.5px;top:335.0px;font-size:13px;font-weight:400;color:#222;transform:scaleX(0.988);transform-origin:0 0">3.7K</span>
<span class="t" style="left:1029.8px;top:360.0px;font-size:13px;font-weight:400;-webkit-text-stroke:0.28px;color:#111;letter-spacing:0.27px">Некритические ошибки:</span>
<span class="t" style="left:1181.9px;top:360.0px;font-size:13px;font-weight:400;color:#222;transform:scaleX(0.969);transform-origin:0 0">5.9K</span>
<span class="t" style="left:1029.8px;top:385.0px;font-size:13px;font-weight:400;-webkit-text-stroke:0.28px;color:#111;letter-spacing:0.31px">Критические ошибки:</span>
<span class="t" style="left:1167.1px;top:385.0px;font-size:13px;font-weight:400;color:#222;transform:scaleX(0.913);transform-origin:0 0">21</span>
<span class="t" style="left:1029.8px;top:410.0px;font-size:13px;font-weight:400;-webkit-text-stroke:0.28px;color:#111;letter-spacing:0.32px">Дата:</span>
<span class="t" style="left:1066.5px;top:410.0px;font-size:13px;font-weight:400;color:#222;letter-spacing:-0.21px">21-02-2017, 14:51</span>
<span class="t" style="left:1286.9px;top:363.4px;font-size:13px;font-weight:400;-webkit-text-stroke:0.28px;color:#111;letter-spacing:-0.01px">Оценка</span>
<span class="t" style="left:1282.1px;top:382.0px;font-size:13px;font-weight:400;-webkit-text-stroke:0.28px;color:#111;letter-spacing:-0.64px">SDO: 59%</span>
<span class="t" style="left:1429.0px;top:330.0px;font-size:13px;font-weight:400;-webkit-text-stroke:0.28px;color:#2866b8;letter-spacing:-0.24px">Google UA</span>
<span class="t" style="left:1402.8px;top:351.6px;font-size:13px;font-weight:400;color:#1f1f1f;letter-spacing:-0.15px">Top 1-1</span>
<span class="t" style="left:1526.5px;top:351.6px;font-size:13px;font-weight:400;color:#1f1f1f;transform:scaleX(1.088);transform-origin:0 0">0</span>
<span class="t" style="left:1402.8px;top:376.6px;font-size:13px;font-weight:400;color:#1f1f1f;letter-spacing:0.02px">Top 1-3</span>
<span class="t" style="left:1526.5px;top:376.6px;font-size:13px;font-weight:400;color:#1f1f1f;transform:scaleX(1.088);transform-origin:0 0">0</span>
<span class="t" style="left:1540.8px;top:376.6px;font-size:13px;font-weight:400;color:#d9646a;transform:scaleX(0.993);transform-origin:0 0">-1</span>
<span class="t" style="left:1402.8px;top:401.6px;font-size:13px;font-weight:400;color:#1f1f1f;letter-spacing:0.02px">Top 1-5</span>
<span class="t" style="left:1526.5px;top:401.6px;font-size:13px;font-weight:400;color:#1f1f1f;transform:scaleX(1.088);transform-origin:0 0">0</span>
<span class="t" style="left:1540.8px;top:401.6px;font-size:13px;font-weight:400;color:#d9646a;transform:scaleX(1.005);transform-origin:0 0">-2</span>
<span class="t" style="left:1402.8px;top:426.6px;font-size:13px;font-weight:400;color:#1f1f1f;letter-spacing:-0.02px">Top 1-10</span>
<span class="t" style="left:1526.5px;top:426.6px;font-size:13px;font-weight:400;color:#1f1f1f;transform:scaleX(1.088);transform-origin:0 0">0</span>
<span class="t" style="left:1540.8px;top:426.6px;font-size:13px;font-weight:400;color:#d9646a;transform:scaleX(1.005);transform-origin:0 0">-2</span>
<span class="t" style="left:1402.8px;top:451.6px;font-size:13px;font-weight:400;color:#1f1f1f;letter-spacing:-0.02px">Top 1-20</span>
<span class="t" style="left:1526.5px;top:451.6px;font-size:13px;font-weight:400;color:#1f1f1f;transform:scaleX(1.088);transform-origin:0 0">0</span>
<span class="t" style="left:1540.8px;top:451.6px;font-size:13px;font-weight:400;color:#d9646a;transform:scaleX(0.993);transform-origin:0 0">-3</span>
<span class="t" style="left:1042.2px;top:628.6px;font-size:13px;font-weight:700;color:#fff;letter-spacing:-0.30px">Начать аудит сайта</span>
<span class="t" style="left:1412.4px;top:628.6px;font-size:13px;font-weight:700;color:#fff;letter-spacing:-0.26px">Отслеживать позиции</span>
</div>
</body></html>
